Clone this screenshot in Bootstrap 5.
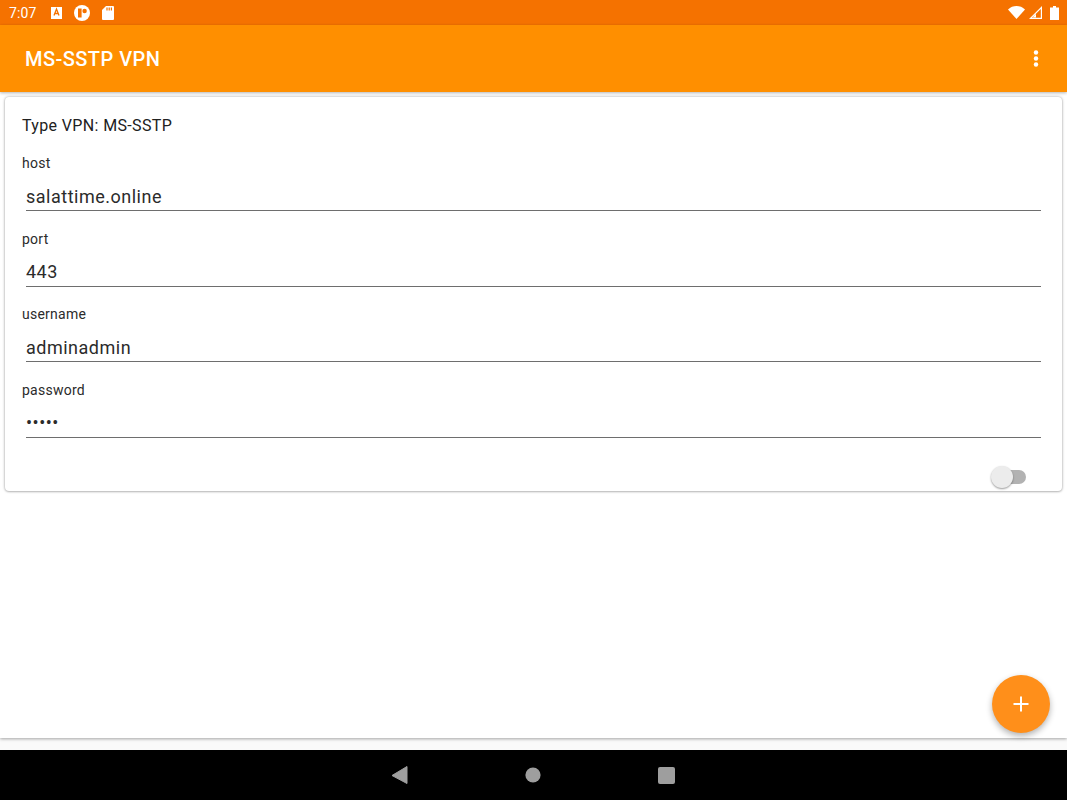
<!DOCTYPE html>
<html lang="en">
<head>
    <meta charset="UTF-8">
    <meta name="viewport" content="width=device-width, initial-scale=1.0">
    <title>MS-SSTP VPN</title>
    <link href="https://cdn.jsdelivr.net/npm/bootstrap@5.3.3/dist/css/bootstrap.min.css" rel="stylesheet">
    <style>
        html, body { height: 100%; }
        body { font-family: Roboto, "Liberation Sans", sans-serif; background: #fafafa; color: #212121; overflow: hidden; }
        .screen { height: 800px; position: relative; }
        .status-bar { height: 25px; background: #f57200; color: #fff; font-size: 14px; letter-spacing: .1px; padding: 0 8px 0 9px; }
        .status-left { gap: 12px; }
        .status-time { width: 28px; margin-right: 2px; padding-top: 1px; }
        .app-bar { height: 67px; background: #ff8f00; color: #fff; padding: 0 25px; box-shadow: 0 1px 3px rgba(0,0,0,.3); position: relative; }
        .app-title { font-size: 20px; font-weight: 500; letter-spacing: .45px; margin: 0; }
        .content-area { height: 646px; background: #fff; padding: 5px; box-shadow: 0 1px 3px rgba(0,0,0,.35); }
        .vpn-card { height: 394px; background: #fff; border-radius: 4px; box-shadow: 0 0 3px rgba(0,0,0,.35), 0 1px 2px rgba(0,0,0,.15); padding: 19px 21px 0 17px; }
        .type-line { font-size: 16px; letter-spacing: .36px; line-height: 19px; margin-bottom: 20px; }
        .field-block { height: 75.5px; }
        .field-label { display: block; font-size: 14px; letter-spacing: .25px; line-height: 17px; margin: 0 0 11px; color: #2b2b2b; }
        .field-input { display: block; width: calc(100% - 4px); margin-left: 4px; height: 28px; padding: 0 0 1px; border: 0; border-bottom: 1px solid #6e6e6e; border-radius: 0; outline: 0; background: transparent; font-size: 18px; letter-spacing: .5px; line-height: 24px; color: #2b2b2b; font-family: inherit; }
        .switch-row { padding-right: 15px; margin-top: 13px; }
        .switch-track { width: 32px; height: 14px; border-radius: 7px; background: #b2b2b2; position: relative; }
        .switch-knob { width: 22px; height: 22px; border-radius: 50%; background: #ececec; position: absolute; left: -3px; top: -4px; box-shadow: 0 1px 2px rgba(0,0,0,.4); }
        .nav-gap { height: 12px; }
        .nav-bar { height: 50px; background: #000; padding-left: 391px; }
        .nav-icons { gap: 117px; }
        .fab-add { position: absolute; left: 992px; top: 675px; width: 58px; height: 58px; padding: 0; border: 0; border-radius: 50%; background: #ff8f1a; box-shadow: 0 3px 6px rgba(0,0,0,.3); }
        .menu-btn { padding: 0; border: 0; background: transparent; line-height: 0; margin-right: 3px; margin-top: -1px; }
    </style>
</head>
<body>
    <div class="screen">
        <!-- Status bar -->
        <div class="status-bar d-flex align-items-center justify-content-between">
            <div class="status-left d-flex align-items-center">
                <span class="status-time">7:07</span>
                <svg width="11" height="12" viewBox="0 0 11 12"><path d="M0 0h11v12H0z" fill="#fff"/><path d="M3 8.5 5.5 2 8 8.5M3.9 6.5h3.2" fill="none" stroke="#f57200" stroke-width="1.3"/></svg>
                <svg width="16" height="16" viewBox="0 0 16 16"><circle cx="8" cy="8" r="8" fill="#fff"/><rect x="4" y="3.500" width="3.600" height="9" fill="#f57200"/><circle cx="10.600" cy="6" r="2.200" fill="#f57200"/></svg>
                <svg width="12" height="14" viewBox="0 0 12 14"><path d="M4 0h7a1 1 0 0 1 1 1v12a1 1 0 0 1-1 1H1a1 1 0 0 1-1-1V4z" fill="#fff"/><path d="M5 1.500v3M7.200 1.500v3M9.400 1.500v3" stroke="#f57200" stroke-width="1.200"/></svg>
            </div>
            <div class="d-flex align-items-center">
                <svg width="17" height="13" viewBox="0 0 17 13"><path d="M0 3.500C4.800-1.100 12.200-1.100 17 3.500L8.500 13z" fill="#fff"/></svg>
                <svg class="ms-1" width="13" height="13" viewBox="0 0 13 13"><path d="M13 0v13H0zM11.800 3 2.900 11.800h8.900z" fill="#fff" fill-rule="evenodd"/><path d="M7 7.800 3.500 11.500H7z" fill="#fff"/></svg>
                <svg class="ms-2" width="9" height="14" viewBox="0 0 9 14"><path d="M3 0h3v1.500h3V14H0V1.500h3z" fill="#fff"/></svg>
            </div>
        </div>

        <!-- App bar -->
        <div class="app-bar d-flex align-items-center justify-content-between">
            <h1 class="app-title">MS-SSTP VPN</h1>
            <button type="button" class="menu-btn" aria-label="More options">
                <svg width="6" height="17" viewBox="0 0 6 17" fill="#fff"><circle cx="3" cy="2.500" r="2.200"/><circle cx="3" cy="8.500" r="2.200"/><circle cx="3" cy="14.500" r="2.200"/></svg>
            </button>
        </div>

        <!-- Profile card -->
        <div class="content-area">
            <form class="vpn-card">
                <div class="type-line">Type VPN: MS-SSTP</div>
                <div class="field-block">
                    <label class="field-label" for="host">host</label>
                    <input class="field-input" id="host" type="text" value="salattime.online">
                </div>
                <div class="field-block">
                    <label class="field-label" for="port">port</label>
                    <input class="field-input" id="port" type="text" value="443">
                </div>
                <div class="field-block">
                    <label class="field-label" for="username">username</label>
                    <input class="field-input" id="username" type="text" value="adminadmin">
                </div>
                <div class="field-block">
                    <label class="field-label" for="password">password</label>
                    <input class="field-input" id="password" type="password" value="admin">
                </div>
                <div class="switch-row d-flex justify-content-end">
                    <div class="switch-track"><div class="switch-knob"></div></div>
                </div>
            </form>
        </div>
        <div class="nav-gap"></div>

        <!-- Navigation bar -->
        <div class="nav-bar d-flex align-items-center">
            <div class="nav-icons d-flex align-items-center">
                <svg width="17" height="18" viewBox="0 0 17 18"><path d="M16 0.500V17.500L1 9.500z" fill="#9e9e9e" stroke="#9e9e9e" stroke-linejoin="round"/></svg>
                <svg width="16" height="16" viewBox="0 0 16 16"><circle cx="8" cy="8" r="7.600" fill="#9e9e9e"/></svg>
                <svg width="17" height="17" viewBox="0 0 17 17"><rect width="17" height="17" rx="2" fill="#9e9e9e"/></svg>
            </div>
        </div>

        <!-- Add profile button -->
        <button type="button" class="fab-add d-flex align-items-center justify-content-center" aria-label="Add">
            <svg width="16" height="16" viewBox="0 0 16 16"><path d="M8 0.500v15M0.500 8h15" stroke="#fff" stroke-width="2"/></svg>
        </button>
    </div>
    <script src="https://cdn.jsdelivr.net/npm/bootstrap@5.3.3/dist/js/bootstrap.bundle.min.js"></script>
</body>
</html>
